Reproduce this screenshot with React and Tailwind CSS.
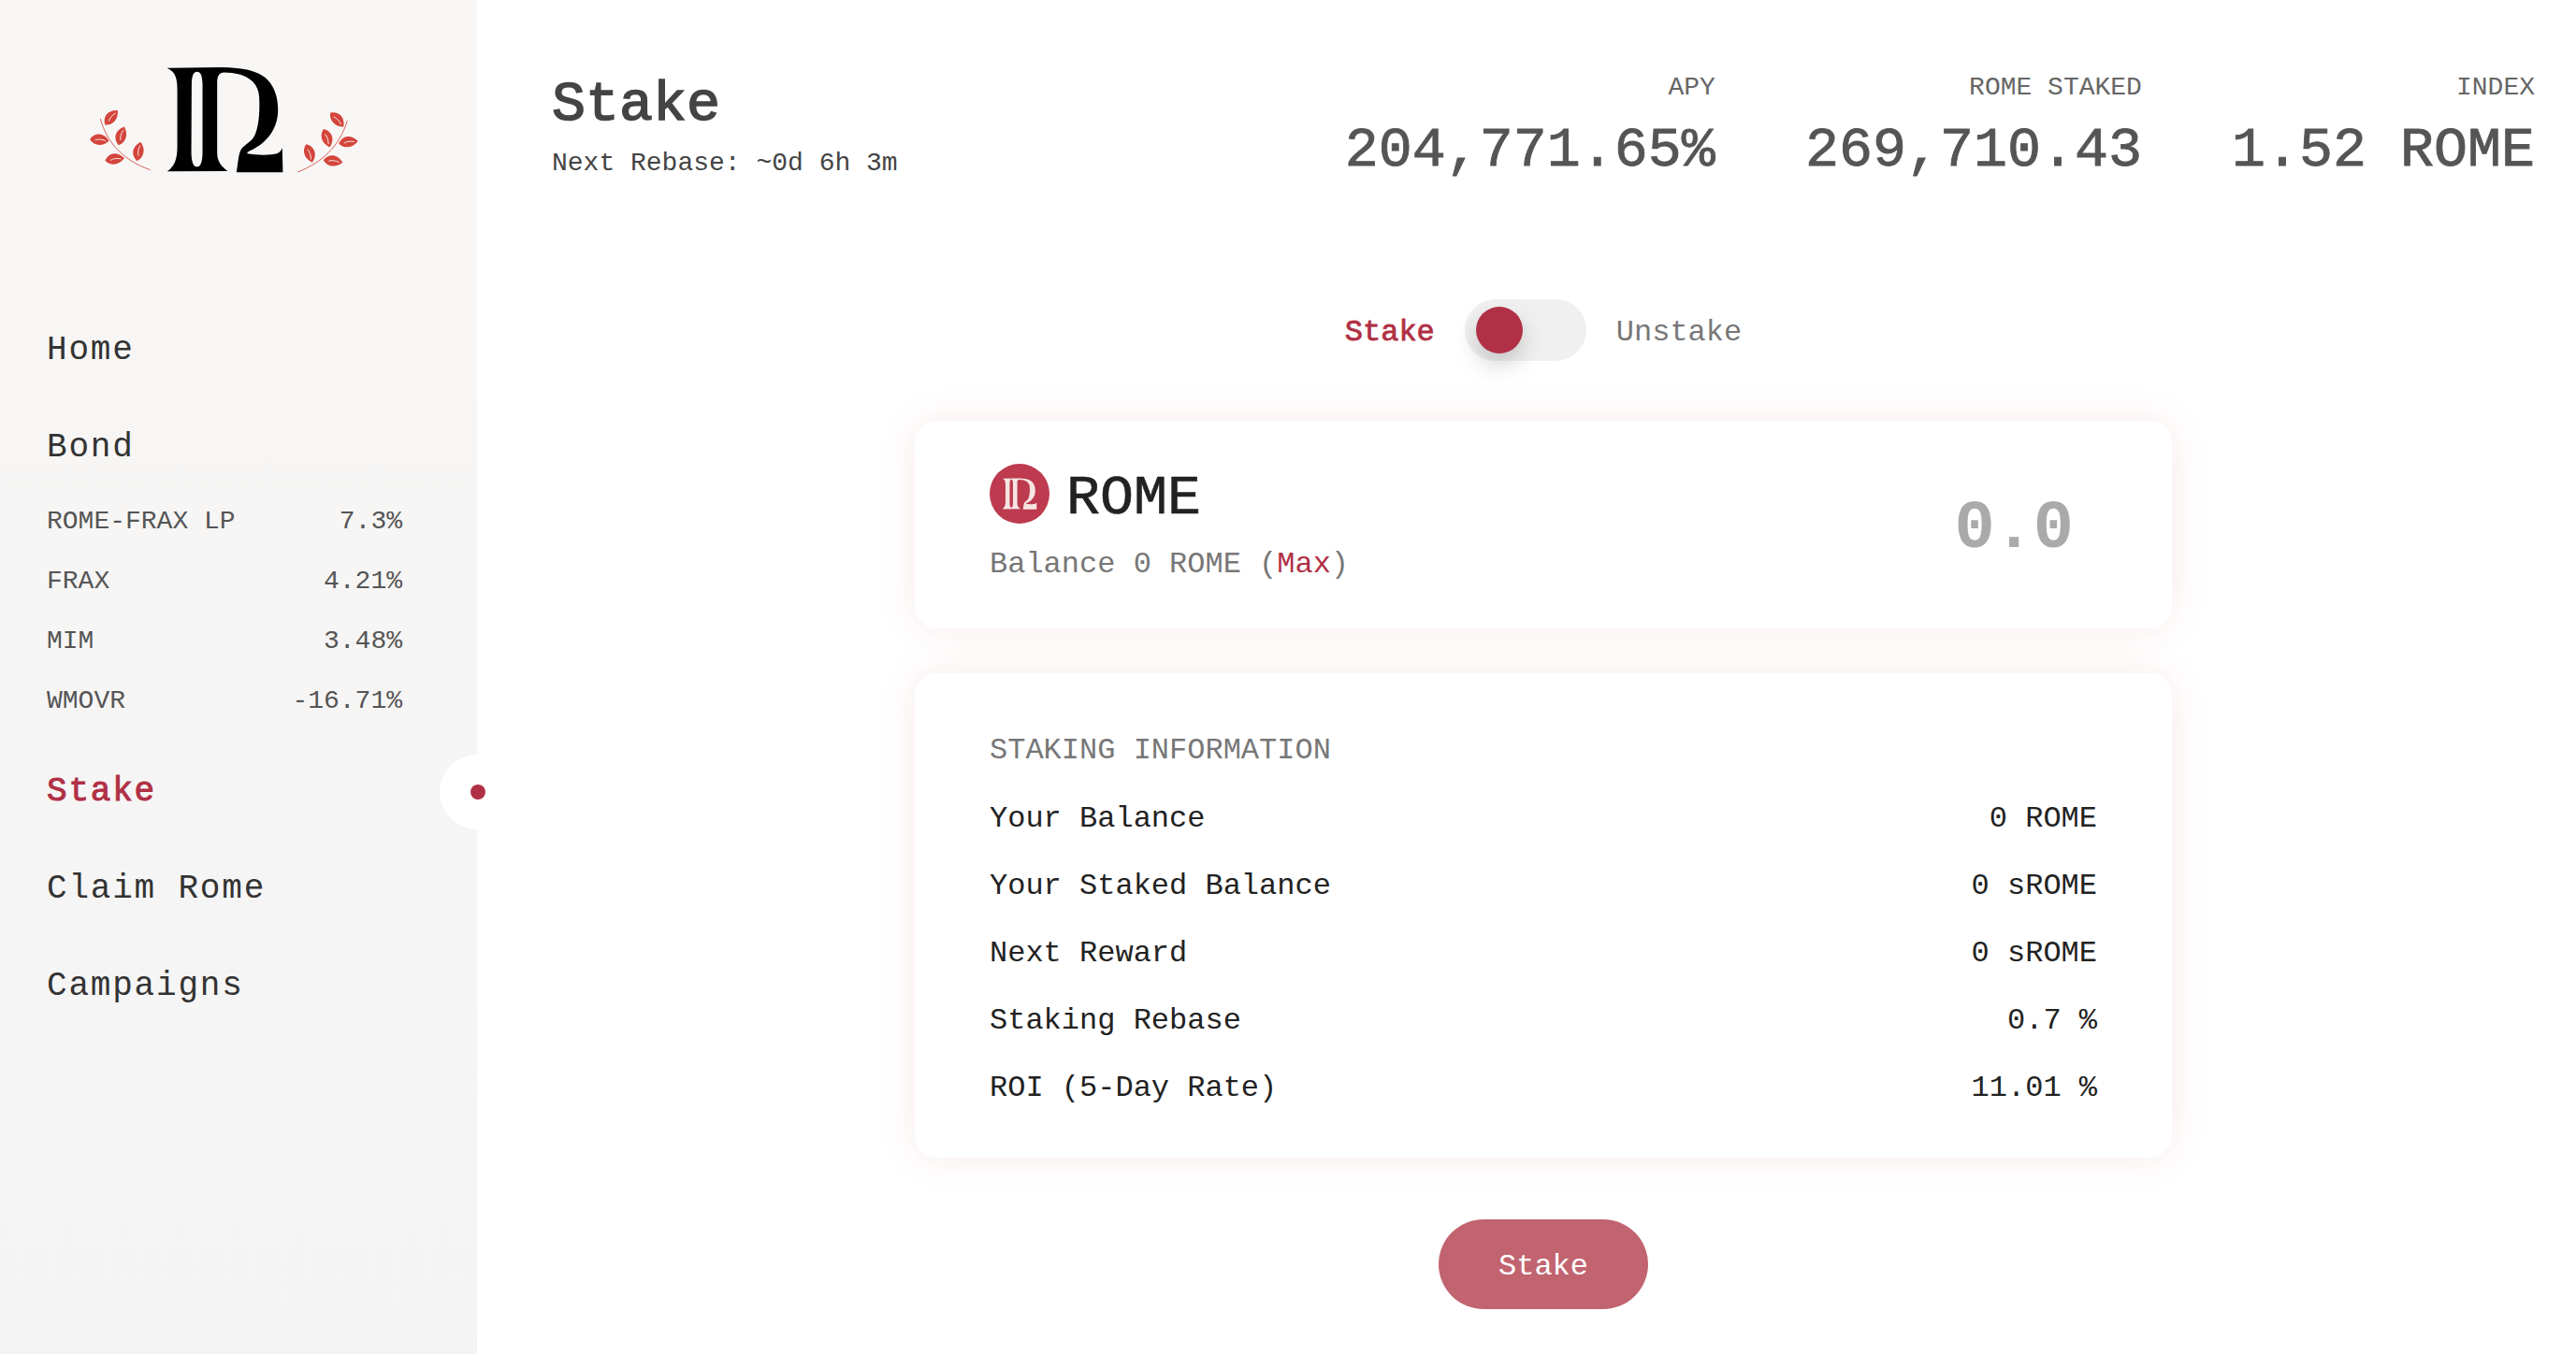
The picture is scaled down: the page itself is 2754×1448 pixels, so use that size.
const MARK =
  "M537 217L700 215C780 215 830 225 860 255C885 280 895 320 893 360C890 420 850 465 795 487L795 492C820 497 870 498 890 492C900 488 905 480 907 473L909 552L760 552C765 520 767 490 775 478C785 462 810 455 820 430C833 400 835 350 833 310C830 260 790 232 720 231C705 232 698 240 698 265L698 490C698 520 715 535 732 548L537 549C560 535 570 510 570 470L570 290C570 250 565 230 537 217ZM633 229C622 229 617 240 616 270L615 490C616 520 622 534 633 534C645 534 650 520 651 490L651 270C650 240 645 229 633 229Z";

const leavesLeft = [
  [358, 376, -48],
  [390, 435, -72],
  [320, 448, 6],
  [369, 510, -6],
  [446, 485, -78],
];
const leavesRight = [
  [1083, 383, 48],
  [1050, 442, 72],
  [1119, 455, -6],
  [1070, 516, 8],
  [994, 491, 72],
];

function Leaf({ x, y, angle }) {
  return (
    <g transform={`translate(${x} ${y}) rotate(${angle})`}>
      <path d="M-31 1C-16 -24 12 -24 31 0C12 21 -16 21 -31 1Z" fill="#d4453c" />
      <path d="M-14 2C-4 -3 8 -3 20 1" stroke="#f8f7f5" strokeWidth="2.5" fill="none" />
    </g>
  );
}

function Logo() {
  return (
    <svg width="293" height="120" viewBox="280 200 880 360">
      <path d={MARK} fill="#000" fillRule="evenodd" />
      <path d="M323 380C345 460 400 515 483 544" stroke="#d4453c" strokeWidth="2.5" fill="none" />
      <path d="M1116 386C1090 470 1035 520 957 551" stroke="#d4453c" strokeWidth="2.5" fill="none" />
      {leavesLeft.map(([x, y, a]) => (
        <Leaf key={`${x}`} x={x} y={y} angle={a} />
      ))}
      {leavesRight.map(([x, y, a]) => (
        <Leaf key={`${x}`} x={x} y={y} angle={a} />
      ))}
    </svg>
  );
}

function RomeIcon() {
  return (
    <div className="w-16 h-16 rounded-full bg-[#bd3a4f] flex items-center justify-center shrink-0">
      <svg width="38" height="34" viewBox="530 210 385 345">
        <path d={MARK} fill="#f6e4e2" fillRule="evenodd" />
      </svg>
    </div>
  );
}

const bonds = [
  ["ROME-FRAX LP", "7.3%"],
  ["FRAX", "4.21%"],
  ["MIM", "3.48%"],
  ["WMOVR", "-16.71%"],
];

const stats = [
  ["APY", "204,771.65%"],
  ["ROME STAKED", "269,710.43"],
  ["INDEX", "1.52 ROME"],
];

const rows = [
  ["Your Balance", "0 ROME"],
  ["Your Staked Balance", "0 sROME"],
  ["Next Reward", "0 sROME"],
  ["Staking Rebase", "0.7 %"],
  ["ROI (5-Day Rate)", "11.01 %"],
];

function NavItem({ label, active }) {
  return (
    <div
      className={`h-16 flex items-center text-[36px] tracking-[1.8px] ${
        active ? "text-[#b03045] [-webkit-text-stroke:1px_#b03045]" : "text-[#333333]"
      }`}
    >
      {label}
    </div>
  );
}

export default function App() {
  return (
    <div className="h-screen flex overflow-hidden bg-white font-['Liberation_Mono',monospace]">
      {/* Sidebar */}
      <aside className="relative w-[510px] shrink-0 bg-linear-to-b from-[#f8f7f5] to-[#f5f4f5]">
        <div className="pl-[93px] pt-[67px]">
          <Logo />
        </div>

        <nav className="mt-[156px] px-[50px] w-[480px]">
          <NavItem label="Home" />
          <div className="mt-10">
            <NavItem label="Bond" />
          </div>
          <div className="mt-[15px] text-[28px] text-[#555555]">
            {bonds.map(([name, pct]) => (
              <div key={name} className="h-16 flex items-center justify-between">
                <span>{name}</span>
                <span>{pct}</span>
              </div>
            ))}
          </div>
          <div className="mt-[33px]">
            <NavItem label="Stake" active />
          </div>
          <div className="mt-10">
            <NavItem label="Claim Rome" />
          </div>
          <div className="mt-10">
            <NavItem label="Campaigns" />
          </div>
        </nav>

        {/* Active marker */}
        <div className="absolute right-0 top-[807px] w-10 h-20 rounded-l-full bg-white" />
        <div className="absolute right-[-9px] top-[839px] w-4 h-4 rounded-full bg-[#b03045]" />
      </aside>

      {/* Main */}
      <main className="flex-1 min-w-0 pl-20 pr-11 pt-[76px] flex flex-col items-center">
        <header className="w-full flex justify-between items-start">
          <div>
            <h1 className="text-[60px] leading-[72px] text-[#444444] [-webkit-text-stroke:1.6px_#444444]">
              Stake
            </h1>
            <p className="mt-[9px] text-[28px] leading-9 text-[#444444]">
              Next Rebase: ~0d 6h 3m
            </p>
          </div>
          <div className="flex gap-24">
            {stats.map(([label, value]) => (
              <div key={label} className="text-right">
                <div className="text-[28px] leading-9 text-[#666666]">{label}</div>
                <div className="mt-[13px] text-[60px] leading-[72px] text-[#555555] [-webkit-text-stroke:0.9px_#555555]">
                  {value}
                </div>
              </div>
            ))}
          </div>
        </header>

        {/* Toggle */}
        <div className="mt-[123px] flex items-center gap-8 text-[32px]">
          <span className="pt-[6px] text-[#b03045] [-webkit-text-stroke:0.8px_#b03045]">Stake</span>
          <div className="w-[130px] h-[66px] rounded-full bg-[#f0f0f0] flex items-center pl-3">
            <div className="w-[50px] h-[50px] rounded-full bg-[#b03045] shadow-[0_12px_24px_rgba(0,0,0,0.18)]" />
          </div>
          <span className="pt-[6px] text-[#777777]">Unstake</span>
        </div>

        {/* Amount card */}
        <section className="mt-16 w-[1344px] h-[222px] rounded-3xl bg-white shadow-[0_0_40px_rgba(190,60,60,0.1)] flex justify-between items-start pl-20 pr-[106px] pt-[46px]">
          <div>
            <div className="h-16 flex items-center gap-[18px]">
              <RomeIcon />
              <span className="mt-[10px] text-[60px] leading-[72px] text-[#222222] [-webkit-text-stroke:0.6px_#222222]">
                ROME
              </span>
            </div>
            <div className="mt-6 text-[32px] leading-10 text-[#777777]">
              Balance 0 ROME (<span className="text-[#b03045]">Max</span>)
            </div>
          </div>
          <div className="mt-[30px] text-[72px] leading-[80px] tracking-[-1px] font-bold text-[#aaaaaa]">
            0.0
          </div>
        </section>

        {/* Staking info */}
        <section className="mt-12 w-[1344px] h-[518px] rounded-3xl bg-white shadow-[0_0_40px_rgba(190,60,60,0.1)] px-20 pt-[63px]">
          <div className="text-[32px] leading-10 text-[#777777]">STAKING INFORMATION</div>
          <div className="mt-[33px] flex flex-col gap-8">
            {rows.map(([label, value]) => (
              <div key={label} className="flex justify-between text-[32px] leading-10 text-[#222222]">
                <span>{label}</span>
                <span>{value}</span>
              </div>
            ))}
          </div>
        </section>

        <button className="mt-[66px] w-[224px] h-24 pt-[6px] rounded-full bg-[#c26470] text-[32px] text-white">
          Stake
        </button>
      </main>
    </div>
  );
}
